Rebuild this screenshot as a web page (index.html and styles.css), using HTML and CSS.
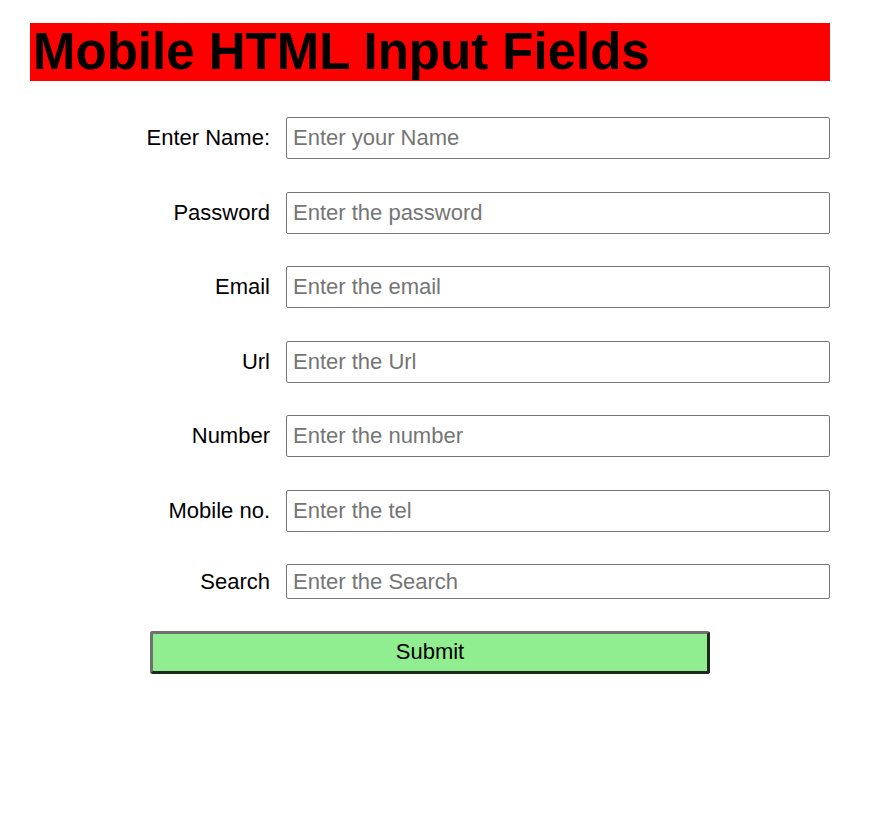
FILE: index.html
```html
<!DOCTYPE html>
<html lang="en">
<head>
	<meta charset="UTF-8">
	<title>Mobile HTML Input Fields</title>
	<link rel="stylesheet" href="styles.css">
</head>
<body>
	<div class="wrap">
		<h1 class="title">Mobile HTML Input Fields</h1>
		<form class="form">
			<label class="lbl" for="name">Enter Name:</label>
			<input class="field" id="name" type="text" placeholder="Enter your Name">

			<label class="lbl" for="pass">Password</label>
			<input class="field" id="pass" type="password" placeholder="Enter the password">

			<label class="lbl" for="email">Email</label>
			<input class="field" id="email" type="email" placeholder="Enter the email">

			<label class="lbl" for="url">Url</label>
			<input class="field" id="url" type="url" placeholder="Enter the Url">

			<label class="lbl" for="num">Number</label>
			<input class="field" id="num" type="number" placeholder="Enter the number">

			<label class="lbl" for="tel">Mobile no.</label>
			<input class="field" id="tel" type="tel" placeholder="Enter the tel">

			<label class="lbl" for="search">Search</label>
			<input class="field field-search" id="search" type="search" placeholder="Enter the Search">

			<div class="actions">
				<button class="submit" type="submit">Submit</button>
			</div>
		</form>
	</div>
</body>
</html>
```

FILE: styles.css
```css
body{
	margin: 0;
	font-family: "Liberation Sans", Arial, sans-serif;
	color: #000;
	background: #fff;
}
.wrap{
	width: 800px;
	margin-left: 30px;
	padding-top: 23px;
}
.title{
	margin: 0;
	height: 58px;
	line-height: 58px;
	background: #ff0000;
	font-size: 51px;
	font-weight: bold;
	padding-left: 3px;
}
.form{
	display: grid;
	grid-template-columns: 240px 1fr;
	column-gap: 16px;
	row-gap: 32.5px;
	align-items: center;
	margin-top: 36px;
}
.lbl{
	text-align: right;
	font-size: 22px;
}
.field{
	box-sizing: border-box;
	height: 42px;
	width: 100%;
	margin: 0;
	padding: 0 6px;
	border: 1px solid #767676;
	border-radius: 2px;
	font-family: inherit;
	font-size: 22px;
	color: #000;
}
.field::placeholder{
	color: #757575;
}
.field-search{
	height: 35px;
}
.actions{
	grid-column: 1 / 3;
	padding-left: 120px;
	margin-top: -1px;
}
.submit{
	box-sizing: border-box;
	width: 560px;
	height: 43px;
	border: 3px solid;
	border-color: #707070 #1c2a1c #1c2a1c #707070;
	border-radius: 3px;
	background: #90ee90;
	font-family: inherit;
	font-size: 22px;
	color: #000;
	cursor: pointer;
}
```
